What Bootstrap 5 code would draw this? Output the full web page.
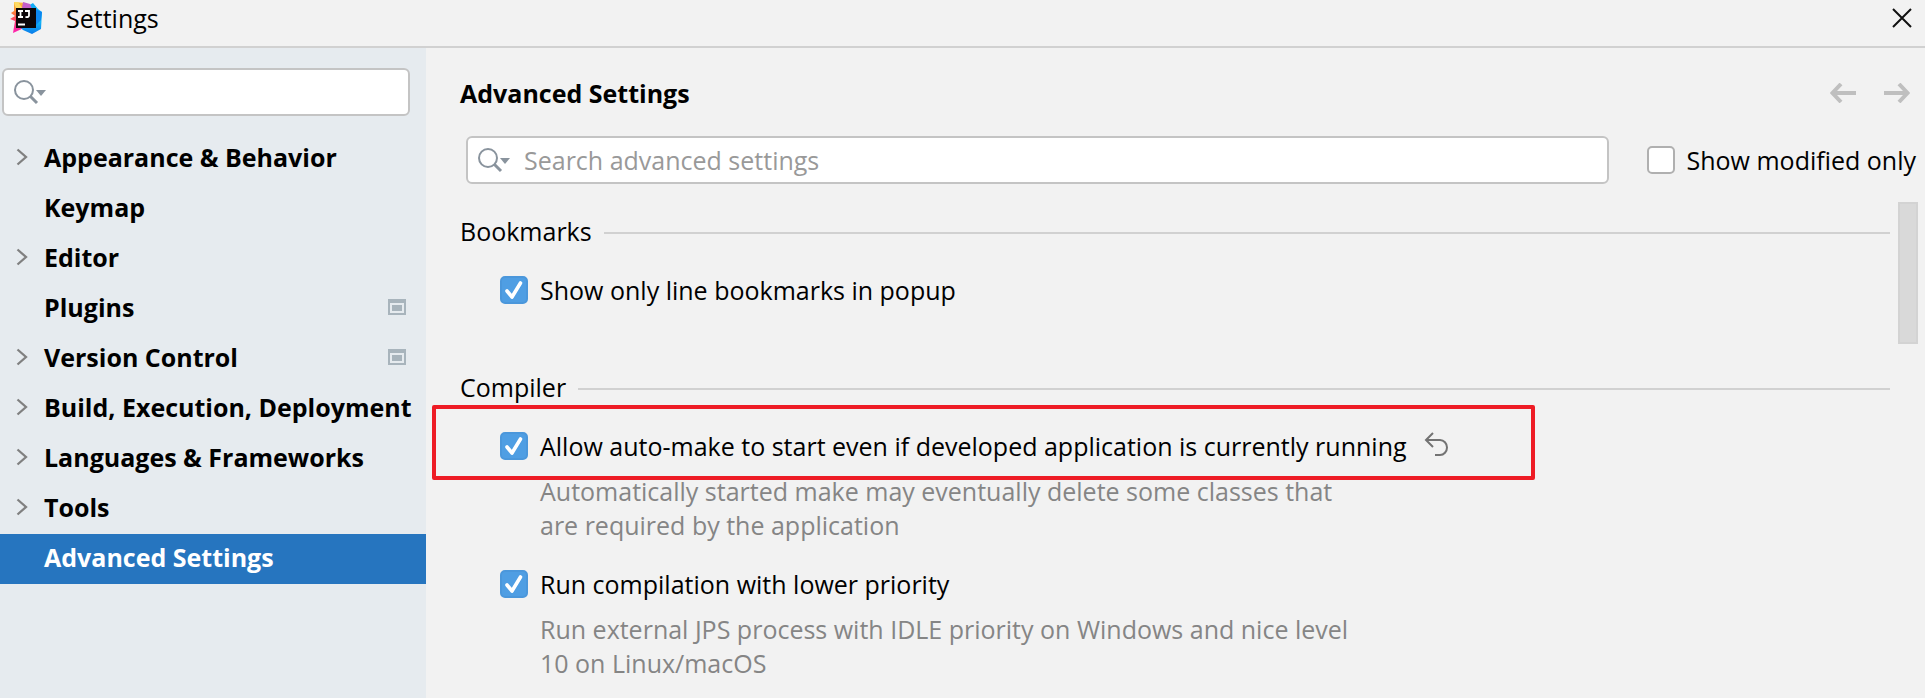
<!DOCTYPE html>
<html lang="en">
<head>
<meta charset="utf-8">
<meta name="viewport" content="width=device-width, initial-scale=1">
<title>Settings</title>
<link href="https://cdn.jsdelivr.net/npm/bootstrap@5.3.0/dist/css/bootstrap.min.css" rel="stylesheet">
<style>
  :root { --line: #d1d1d1; --field: #c4c4c4; --muted: #858585; }
  body { font-family: "Open Sans", "Noto Sans", sans-serif; font-size: 25px; line-height: 34px; color: #000; background: #f2f2f2; }
  svg { display: block; flex: none; }
  .titlebar { height: 48px; border-bottom: 2px solid var(--line); padding: 0 13px 10px 9px; }
  .titlebar .app-name { margin-left: 23px; }
  .icon-btn { border: 0; background: none; padding: 0; }
  .sidebar { width: 426px; background: #e6ebef; padding-top: 20px; }
  .search-box { height: 48px; background: #fff; border: 2px solid var(--field); border-radius: 6px; padding-left: 9px; }
  .search-box input { border: 0; outline: 0; background: none; padding: 0; margin-left: 13px; min-width: 0; color: #000; }
  .search-box input::placeholder { color: #999; opacity: 1; }
  .sidebar .search-box { margin: 0 16px 18px 2px; }
  .tree a { height: 50px; padding: 0 20px 4px 16px; color: #000; font-weight: 700; text-decoration: none; white-space: nowrap; }
  .tree a.active { background: #2675bf; color: #fff; }
  .tree .arrow { width: 28px; flex: none; }
  .content { padding: 28px 7px 0 8px; min-width: 0; }
  h1 { font-size: 25px; line-height: 34px; font-weight: 700; margin: 0; }
  .content-head { padding: 0 8px 0 26px; margin-bottom: 26px; }
  .history { gap: 28px; }
  .filter-row { margin: 0 2px 0 32px; }
  .filter-row .check-line { margin-left: 38px; }
  .check-line label { padding-left: 12px; white-space: nowrap; }
  input.tick { appearance: none; flex: none; width: 28px; height: 28px; margin: 0; background: #fff; border: 2px solid #b0b0b0; border-radius: 5px; }
  input.tick:checked { border-color: #4b97db; background: #4f9ee3 url("data:image/svg+xml,%3Csvg xmlns='http://www.w3.org/2000/svg' viewBox='0 0 24 24'%3E%3Cpath d='M5 13l5 6L18.500 5' fill='none' stroke='%23fff' stroke-width='3.600' stroke-linecap='round' stroke-linejoin='round'/%3E%3C/svg%3E") center/24px no-repeat; }
  .options { padding: 30px 0 0 26px; min-width: 0; }
  .group-title { font-size: 25px; line-height: 34px; font-weight: 400; margin: 0; }
  .group-line { height: 2px; background: var(--line); margin-left: 12px; margin-top: 4px; }
  .option-group + .option-group { margin-top: 63px; }
  .option { padding-left: 40px; margin-top: 25px; }
  .option-note { padding-left: 80px; color: var(--muted); margin: 0; }
  .option + .option-note { margin-top: 11px; }
  /* the frame reaches down over the top of the note below it */
  .flagged { border: 4px solid #ee1c25; border-radius: 2px; margin: 1px 355px -6px -28px; height: 75px; padding: 7px 0 0 64px; }
  .reset { margin: 0 0 5px 17px; }
  .thumb { width: 20px; height: 142px; background: #d9d9d9; border: 2px solid #d3d3d3; margin: 18px 0 0 8px; }
</style>
</head>
<body class="d-flex flex-column min-vh-100 overflow-hidden">
<header class="titlebar d-flex align-items-center">
  <svg class="app-icon" width="34" height="34" viewBox="0 0 34 34" aria-hidden="true">
    <defs>
      <linearGradient id="warm" x1="0" y1="0" x2="0" y2="1"><stop offset="0" stop-color="#fdc63a"/><stop offset=".35" stop-color="#fb7a3c"/><stop offset=".6" stop-color="#fb3f6c"/><stop offset="1" stop-color="#fe22b4"/></linearGradient>
      <linearGradient id="cool" x1="0" y1="0" x2="0" y2="1"><stop offset="0" stop-color="#12a9f5"/><stop offset=".5" stop-color="#14c3fa"/><stop offset="1" stop-color="#0a7bea"/></linearGradient>
    </defs>
    <path d="M5 1l12 1 4 5-4 19-13 6 2-12-5-2 5-3-4-3 3-2z" fill="url(#warm)"/>
    <path d="M17 6l7-4 5 6 4 3-1 17-9 5-9-4-3-3 8-3z" fill="url(#cool)"/>
    <path d="M14 1l7 2 2 5-5 1-5-2z" fill="#c45fc9"/>
    <path d="M26 8l7 3-1 8-5 5z" fill="#0d86f0"/>
    <path d="M5 1h4l5 7H7z" fill="#fdda63"/>
    <path d="M7 7h20v20H7z" fill="#0c0608"/>
    <path d="M9 10h5M9 16h5M11.500 10v6M16 10h4v4.500q0 2-3.500 1.500M9 23.500h7" fill="none" stroke="#fff" stroke-width="1.800"/>
  </svg>
  <span class="app-name">Settings</span>
  <button class="icon-btn ms-auto" type="button" aria-label="Close">
    <svg width="20" height="20" viewBox="0 0 20 20"><path d="M1 1l18 18M19 1L1 19" stroke="#111" stroke-width="2"/></svg>
  </button>
</header>
<svg class="d-none">
  <symbol id="lens" viewBox="0 0 34 26"><circle cx="11" cy="11" r="9" fill="none" stroke="#89939d" stroke-width="2"/><path d="M17 17l7 7" stroke="#89939d" stroke-width="3"/><path d="M23 11h10l-5 6z" fill="#89939d"/></symbol>
  <symbol id="chev" viewBox="0 0 12 18"><path d="M1.500 1.500L10 9l-8.500 7.500" fill="none" stroke="#808080" stroke-width="2.300"/></symbol>
  <symbol id="proj" viewBox="0 0 18 16"><path d="M0 0h18v16H0zM2 4v10h14V4z" fill="#a8b4bc" fill-rule="evenodd"/><path d="M4 6h10v6H4z" fill="#a8b4bc"/></symbol>
</svg>
<div class="d-flex flex-grow-1">
  <aside class="sidebar flex-shrink-0">
    <div class="search-box d-flex align-items-center">
      <svg width="34" height="26"><use href="#lens"/></svg>
      <input class="flex-grow-1" type="text" aria-label="Search settings">
    </div>
    <nav class="tree d-flex flex-column">
      <a class="d-flex align-items-center" href="#"><span class="arrow"><svg width="12" height="18"><use href="#chev"/></svg></span>Appearance &amp; Behavior</a>
      <a class="d-flex align-items-center" href="#"><span class="arrow"></span>Keymap</a>
      <a class="d-flex align-items-center" href="#"><span class="arrow"><svg width="12" height="18"><use href="#chev"/></svg></span>Editor</a>
      <a class="d-flex align-items-center" href="#"><span class="arrow"></span>Plugins<svg class="ms-auto" width="18" height="16"><use href="#proj"/></svg></a>
      <a class="d-flex align-items-center" href="#"><span class="arrow"><svg width="12" height="18"><use href="#chev"/></svg></span>Version Control<svg class="ms-auto" width="18" height="16"><use href="#proj"/></svg></a>
      <a class="d-flex align-items-center" href="#"><span class="arrow"><svg width="12" height="18"><use href="#chev"/></svg></span>Build, Execution, Deployment</a>
      <a class="d-flex align-items-center" href="#"><span class="arrow"><svg width="12" height="18"><use href="#chev"/></svg></span>Languages &amp; Frameworks</a>
      <a class="d-flex align-items-center" href="#"><span class="arrow"><svg width="12" height="18"><use href="#chev"/></svg></span>Tools</a>
      <a class="active d-flex align-items-center" href="#" aria-current="page"><span class="arrow"></span>Advanced Settings</a>
    </nav>
  </aside>
  <main class="content flex-grow-1">
    <div class="content-head d-flex align-items-center">
      <h1>Advanced Settings</h1>
      <div class="history d-flex ms-auto">
        <button class="icon-btn" type="button" aria-label="Back"><svg width="26" height="20" viewBox="0 0 26 20"><path d="M26 10H3M11 1L2.500 10l8.500 9" fill="none" stroke="#bfbfbf" stroke-width="4"/></svg></button>
        <button class="icon-btn" type="button" aria-label="Forward"><svg width="26" height="20" viewBox="0 0 26 20"><path d="M0 10h23M15 1l8.500 9-8.500 9" fill="none" stroke="#bfbfbf" stroke-width="4"/></svg></button>
      </div>
    </div>
    <div class="filter-row d-flex align-items-center">
      <div class="search-box d-flex align-items-center flex-grow-1">
        <svg width="34" height="26"><use href="#lens"/></svg>
        <input class="flex-grow-1" type="text" placeholder="Search advanced settings" aria-label="Search advanced settings">
      </div>
      <div class="check-line d-flex align-items-center">
        <input class="tick" type="checkbox" id="modified"><label for="modified">Show modified only</label>
      </div>
    </div>
    <div class="d-flex">
      <div class="options flex-grow-1">
        <section class="option-group">
          <div class="d-flex align-items-center"><h2 class="group-title">Bookmarks</h2><div class="group-line flex-grow-1"></div></div>
          <div class="option check-line d-flex align-items-center"><input class="tick" type="checkbox" id="popup" checked><label for="popup">Show only line bookmarks in popup</label></div>
        </section>
        <section class="option-group">
          <div class="d-flex align-items-center"><h2 class="group-title">Compiler</h2><div class="group-line flex-grow-1"></div></div>
          <div class="flagged check-line d-flex align-items-center"><input class="tick" type="checkbox" id="automake" checked><label for="automake">Allow auto-make to start even if developed application is currently running</label>
            <button class="icon-btn reset" type="button" aria-label="Reset"><svg width="26" height="24" viewBox="0 0 26 24"><path d="M9 1L2 8l7 7M2 8h14a7 7.500 0 0 1 0 15h-5" fill="none" stroke="#737373" stroke-width="2"/></svg></button></div>
          <p class="option-note">Automatically started make may eventually delete some classes that<br>are required by the application</p>
          <div class="option check-line d-flex align-items-center"><input class="tick" type="checkbox" id="priority" checked><label for="priority">Run compilation with lower priority</label></div>
          <p class="option-note">Run external JPS process with IDLE priority on Windows and nice level<br>10 on Linux/macOS</p>
        </section>
      </div>
      <div class="thumb flex-shrink-0" role="presentation"></div>
    </div>
  </main>
</div>
<script src="https://cdn.jsdelivr.net/npm/bootstrap@5.3.0/dist/js/bootstrap.bundle.min.js"></script>
</body>
</html>
